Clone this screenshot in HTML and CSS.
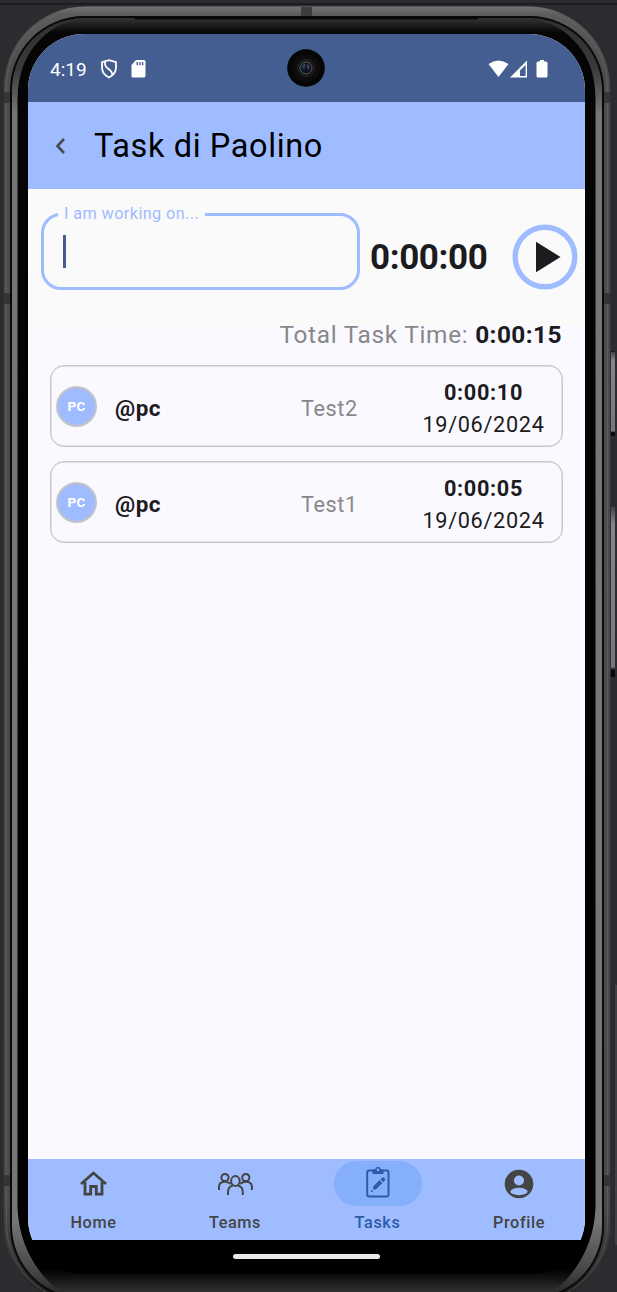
FILE: index.html
```html
<!DOCTYPE html>
<html lang="it">
<head>
<meta charset="utf-8">
<title>Task di Paolino</title>
<link rel="stylesheet" href="styles.css">
</head>
<body>
<div class="stage">
  <svg class="frame" width="617" height="1292" viewBox="0 0 617 1292">
    <defs>
      <linearGradient id="rim" x1="0" y1="0" x2="0" y2="1"><stop offset="0" stop-color="#777575"/><stop offset=".006" stop-color="#5c5c5c"/><stop offset=".05" stop-color="#4c4c4c"/><stop offset=".92" stop-color="#4a4a4a"/><stop offset=".97" stop-color="#303030"/><stop offset="1" stop-color="#1c1c1c"/></linearGradient>
      <linearGradient id="side" x1="0" y1="0" x2="0" y2="1"><stop offset="0" stop-color="#303030"/><stop offset=".04" stop-color="#3a3a3a"/><stop offset=".075" stop-color="#767676"/><stop offset=".94" stop-color="#767676"/><stop offset=".98" stop-color="#444"/><stop offset="1" stop-color="#242424"/></linearGradient>
      <linearGradient id="glass" x1="0" y1="0" x2="0" y2="1"><stop offset="0" stop-color="#303030"/><stop offset=".011" stop-color="#050505"/><stop offset=".978" stop-color="#000"/><stop offset=".996" stop-color="#303030"/><stop offset="1" stop-color="#303030"/></linearGradient>
      <linearGradient id="button" x1="0" y1="0" x2="0" y2="1"><stop offset="0" stop-color="#444"/><stop offset=".1" stop-color="#858585"/><stop offset=".94" stop-color="#777"/><stop offset=".96" stop-color="#080808"/></linearGradient>
    </defs>
    <rect width="617" height="1292" fill="#2b2c30"/>
    <rect y="3" width="617" height="2" fill="#1c1d20"/>
    <rect x="615" y="985" width="2" height="260" fill="#404145"/>
    <rect x="609" y="351" width="6" height="85" rx="1" fill="#161616"/>
    <rect x="611" y="352" width="4" height="84" fill="url(#button)"/>
    <rect x="609" y="507" width="6" height="170" rx="1" fill="#161616"/>
    <rect x="611" y="507" width="4" height="170" fill="url(#button)"/>
    <rect x="3" y="6" width="608" height="1300" rx="82" fill="#303030"/>
    <rect x="4" y="6.500" width="606" height="1299" rx="81" fill="url(#rim)"/>
    <rect x="6.500" y="9.500" width="601" height="1293" rx="78" fill="none" stroke="#686868" stroke-opacity=".6"/>
    <path d="M301 7h11v9h-11z" fill="#3d3d3d"/>
    <path d="M4 92h7v11H4zM603 92h7v11h-7zM4 1175h7v11H4zM603 1175h7v11h-7zM4 293h7v11H4zM603 293h7v11h-7z" fill="#353535"/>
    <rect x="10" y="16" width="594" height="1284" rx="74" fill="#090909"/>
    <rect x="12" y="18" width="590" height="1280" rx="72" fill="url(#side)"/>
    <path d="M17.500 99Q18 58 45 35Q63 19 88 19H525Q550 19 568 35Q595.500 58 595.500 99V1207Q594 1250 565 1281Q551 1297 525 1297H88Q62 1297 48 1281Q19 1250 17.500 1207Z" fill="url(#glass)"/>
    <path d="M135 18H478" stroke="#080808" stroke-width="3"/>
  </svg>

  <main class="screen">
    <header class="status">
      <span class="clock">4:19</span>
      <svg class="shield" width="18" height="20" viewBox="0 0 18 20" fill="none" stroke="#fff" stroke-width="1.800"><path d="M9 1.200L16 3.200V8.500C16 13.500 13 16.500 9 18.500C5 16.500 2 13.500 2 8.500V3.200ZM5 2.600C4.500 6 5.500 8 8.500 10C11 11.700 12.500 13 12.200 16"/></svg>
      <svg class="sdcard" width="15" height="18" viewBox="0 0 15 18"><path d="M5 0H13Q14.500 0 14.500 1.500V15.500Q14.500 17.500 13 17.500H2Q.5 17.500.5 16V5Z" fill="#fff"/><path d="M6.200 2V5.200M8.900 2V5.200M11.600 2V5.200" stroke="#455e91" stroke-width="1.400"/></svg>
      <svg class="camera" width="38" height="38" viewBox="0 0 38 38"><circle cx="19" cy="19" r="18.800" fill="#050505"/><circle cx="19" cy="19" r="14" fill="#0c0c0d"/><circle cx="19" cy="19" r="8.500" fill="#151517" stroke="#252526"/><circle cx="19" cy="19" r="6" fill="#10131c" stroke="#5a5a60"/><path d="M15 18Q16 14 19 15L17 21Z" fill="#24475c"/><path d="M20 15Q24 17 21 21Z" fill="#6b4686"/></svg>
      <svg class="signals" width="60" height="19" viewBox="0 0 60 19"><path d="M.5 4Q10.500-3 20.500 4L10.500 17Z" fill="#fff"/><path d="M39 .5V17.500H22Z" fill="#fff"/><path d="M37.600 5V16H32V10.500Z" fill="#455e91"/><path d="M52 0H56V1.500H58Q59.500 1.500 59.500 3V16Q59.500 17.500 58 17.500H50Q48.500 17.500 48.500 16V3Q48.500 1.500 50 1.500H52Z" fill="#fff"/></svg>
    </header>

    <div class="appbar">
      <svg width="12" height="18" viewBox="0 0 12 18"><path d="M10 2L3.500 9L10 16" fill="none" stroke="#484b50" stroke-width="2.600"/></svg>
      <h1>Task di Paolino</h1>
    </div>

    <section class="tracker">
      <fieldset class="field"><legend>I am working on...</legend><span class="caret"></span></fieldset>
      <div class="timer">0:00:00</div>
      <svg class="play" width="66" height="66" viewBox="0 0 66 66"><circle cx="33" cy="33" r="29.800" fill="none" stroke="#9ebcff" stroke-width="5.400"/><path d="M24 17.700V48.300L48.500 33Z" fill="#1b1b20"/></svg>
    </section>

    <section class="log">
      <p class="total">Total Task Time: <b>0:00:15</b></p>
      <article class="entry"><span class="avatar">PC</span><b class="user">@pc</b><span class="name">Test2</span><div class="when"><b>0:00:10</b><span>19/06/2024</span></div></article>
      <article class="entry"><span class="avatar">PC</span><b class="user">@pc</b><span class="name">Test1</span><div class="when"><b>0:00:05</b><span>19/06/2024</span></div></article>
    </section>

    <nav class="tabs">
      <a class="tab"><span class="pill"><svg width="30" height="26" viewBox="0 0 30 26"><path d="M2 13L14.500 2L27 13M6 11V23.200H11.700V15.500H17.300V23.200H23V11" fill="none" stroke="#444" stroke-width="2.800"/></svg></span><span>Home</span></a>
      <a class="tab"><span class="pill"><svg width="36" height="24" viewBox="0 0 36 24" fill="none" stroke="#444" stroke-width="2"><circle cx="8" cy="5.500" r="3.600"/><circle cx="28.800" cy="5.500" r="3.600"/><ellipse cx="18.400" cy="9" rx="4.300" ry="4.900"/><path d="M2 18V15Q2 9.800 8 9.800Q11.500 9.800 13.500 12M34.900 18V15Q34.900 9.800 28.800 9.800Q25.500 9.800 23.300 12M11 23V20Q11 14.500 16 13.500M25.800 23V20Q25.800 14.500 20.800 13.500"/></svg></span><span>Teams</span></a>
      <a class="tab active"><span class="pill"><svg class="board" width="24" height="32" viewBox="0 0 24 32"><rect x="1.200" y="4.500" width="21.300" height="26" rx="2" fill="none" stroke="#2d5baa" stroke-width="2"/><path d="M6.500 3.500H9Q9.500.8 12 .8Q14.500.8 15 3.500H17.500V8H6.500Z" fill="#2d5baa"/><circle cx="12" cy="3.900" r="1.300" fill="#85affb"/><path d="M7.500 20.500L13.500 14.500L16 17L10 23H7.500ZM14.800 13.300L16.500 12Q17.500 11.500 18.500 12.500T18.500 14.500L17 15.800Z" fill="#2d5baa" stroke="#2d5baa" stroke-width=".8"/><circle cx="6" cy="25" r="1" fill="#2d5baa"/></svg></span><span>Tasks</span></a>
      <a class="tab"><span class="pill"><svg width="30" height="30" viewBox="0 0 30 30"><circle cx="15" cy="15" r="14.300" fill="#444"/><circle cx="15" cy="11.500" r="5" fill="#9ebcff"/><ellipse cx="15" cy="22.500" rx="8.600" ry="3.700" fill="#9ebcff"/></svg></span><span>Profile</span></a>
    </nav>
    <footer class="gesture"><span></span></footer>
  </main>
</div>
</body>
</html>
```
FILE: styles.css
```css
* { box-sizing: border-box; }
body { margin: 0; background: #2b2c30; font-family: Roboto, sans-serif; color: #1b1b20; }
svg { display: block; flex: none; }
.stage { display: grid; width: 617px; height: 1292px; overflow: hidden; }
.frame, .screen { grid-area: 1 / 1; }
.screen { width: 557px; height: 1240px; margin: 34px 0 0 28px; border-radius: 56px; overflow: hidden; display: flex; flex-direction: column; background: linear-gradient(#faf9ff 0 1206px, #000 1206px); }
.status { position: relative; height: 68px; flex: none; background: #455e91; display: flex; align-items: center; padding: 2px 37px 0 22px; color: #fff; }
.clock { font-size: 19px; width: 50px; }
.shield { margin-right: 13px; }
.camera { position: absolute; left: 259px; top: 15px; }
.signals { margin-left: auto; }
.appbar { height: 87px; flex: none; background: #9ebcff; display: flex; align-items: center; padding-left: 26px; color: #000; }
.appbar h1 { margin: 0 0 0 28px; font-size: 32.500px; line-height: 40px; font-weight: 400; letter-spacing: .62px; }
.tracker { height: 137px; flex: none; background: #fafafa; display: flex; padding: 16px 0 0 13px; }
.field { width: 319px; height: 85px; margin: 0; padding: 12px 0 0 19px; border: 3px solid #9ebcff; border-radius: 20px; min-width: 0; }
.field legend { margin-left: -5px; padding: 0 6px 0 6px; color: #9ebcff; font-size: 16.250px; line-height: 18px; letter-spacing: .4px; }
.caret { display: block; width: 3px; height: 33px; background: #455e91; }
.timer { width: 142px; margin-left: 10px; padding-top: 31px; font-size: 35px; line-height: 43px; font-weight: 700; letter-spacing: -.4px; }
.play { margin: 19px 0 0 0; }
.log { flex: 1; padding: 0 22px; display: flex; flex-direction: column; gap: 14px; }
.total { height: 25px; margin: 0; padding-right: 1px; line-height: 18px; font-size: 24.400px; text-align: right; color: #888; letter-spacing: .7px; white-space: nowrap; }
.total b { color: #1b1b20; letter-spacing: .45px; }
.entry { height: 82px; flex: none; border: 1.400px solid #c8c8c8; border-radius: 14px; display: grid; grid-template-columns: 59px 170px 121px 1fr; align-items: center; padding-left: 5px; font-size: 21.700px; letter-spacing: .68px; box-shadow: inset 0 0 0 .5px #c8c8c8; }
.avatar { width: 41px; height: 41px; border: 2px solid #c4c4c8; border-radius: 50%; background: #9ebcff; color: #fff; font-size: 13.500px; font-weight: 700; letter-spacing: .2px; display: grid; place-items: center; }
.user { padding-top: 4px; font-size: 22.500px; letter-spacing: .5px; }
.name { padding: 4px 0 0 16px; color: #888; letter-spacing: .55px; }
.when { display: flex; flex-direction: column; padding: 6px 1px 0 0; line-height: 32.500px; align-items: center; }
.tabs { height: 81px; flex: none; background: #9ebcff; display: grid; grid-template-columns: 131px 152px 133px 1fr; color: #444; }
.tab { display: flex; flex-direction: column; align-items: center; padding-top: 2px; font-size: 16.250px; line-height: 22px; font-weight: 500; letter-spacing: .6px; }
.tab:last-child { padding-left: 9px; }
.pill { width: 88px; height: 45px; margin-bottom: 6px; border-radius: 23px; display: grid; place-items: center; }
.board { margin-bottom: 3px; }
.active { color: #2d5baa; }
.active .pill { background: #85affb; }
.gesture { height: 34px; flex: none; background: #000; display: flex; justify-content: center; padding-top: 14px; }
.gesture span { width: 147px; height: 5px; border-radius: 3px; background: #e9e9e9; }
```
